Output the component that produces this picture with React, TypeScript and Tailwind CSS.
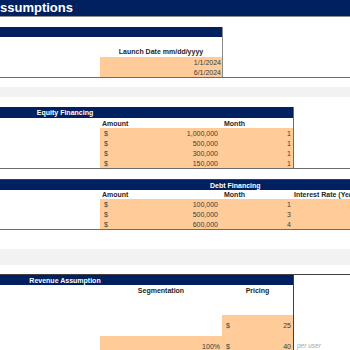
import React from 'react';

const navy = 'bg-[#002060]';
const peach = 'bg-[#ffcc99]';

const Money: React.FC<{ value: string }> = ({ value }) => (
  <div className={`${peach} w-[122px] shrink-0 h-full flex items-center justify-between pl-[4px] pr-[4px]`}>
    <span>$</span>
    <span>{value}</span>
  </div>
);

export default function App() {
  const equity = ['1,000,000', '500,000', '300,000', '150,000'];
  const debt = [
    ['100,000', '1'],
    ['500,000', '3'],
    ['600,000', '4'],
  ];

  return (
    <div
      className="w-[350px] h-[350px] overflow-hidden bg-white text-[7px] leading-none text-[#3a3a3a]"
      style={{ fontFamily: '"Liberation Sans", Arial, sans-serif' }}
    >
      {/* title */}
      <div className={`${navy} h-[17px] border-b border-[#8c8c8c] flex items-center`}>
        <span className="text-white font-bold text-[13px] -mt-[1px]">ssumptions</span>
      </div>
      <div className="h-[10px]" />

      {/* launch date */}
      <div className="w-[223px] border-r border-[#8c8c8c]">
        <div className={`${navy} h-[10px]`} />
        <div className="h-[20px] flex items-end">
          <div className="w-[100px]" />
          <div className="w-[122px] text-center font-bold text-[#262626] pb-[2px]">Launch Date mm/dd/yyyy</div>
        </div>
        {['1/1/2024', '6/1/2024'].map((d) => (
          <div key={d} className="h-[10px] flex">
            <div className="w-[100px]" />
            <div className={`${peach} w-[122px] flex items-center justify-end pr-[1px]`}>{d}</div>
          </div>
        ))}
      </div>
      <div className="h-[1px] bg-[#6b6b6b]" />
      <div className="h-[9px]" />
      <div className="h-[10px] bg-[#f2f2f2]" />
      <div className="h-[10px]" />

      {/* equity */}
      <div className="w-[294px] border-r border-[#6b6b6b]">
        <div className={`${navy} h-[11px] flex items-center`}>
          <div className="w-[130px] text-center text-white font-bold">Equity Financing</div>
        </div>
        <div className="h-[10px] flex items-center font-bold text-[#262626]">
          <div className="w-[102px] shrink-0" />
          <div className="w-[122px] shrink-0">Amount</div>
          <div>Month</div>
        </div>
        {equity.map((v) => (
          <div key={v} className="h-[10px] flex">
            <div className="w-[100px] shrink-0" />
            <Money value={v} />
            <div className={`${peach} flex-1 flex items-center justify-end pr-[2px]`}>1</div>
          </div>
        ))}
      </div>
      <div className="h-[1px] bg-[#6b6b6b]" />
      <div className="h-[10px]" />

      {/* debt */}
      <div className="border-t border-[#404040]">
        <div className={`${navy} h-[10px] flex items-center`}>
          <div className="w-[210px] shrink-0" />
          <div className="text-white font-bold">Debt Financing</div>
        </div>
        <div className="h-[9px] flex items-center font-bold text-[#262626] overflow-hidden">
          <div className="w-[102px] shrink-0" />
          <div className="w-[122px] shrink-0">Amount</div>
          <div className="w-[70px] shrink-0">Month</div>
          <div className="whitespace-nowrap shrink-0">Interest Rate (Yearly)</div>
        </div>
        {debt.map(([v, m]) => (
          <div key={v} className={`h-[10px] flex ${peach}`}>
            <div className="w-[100px] shrink-0 bg-white" />
            <Money value={v} />
            <div className="w-[71px] shrink-0 flex items-center justify-end pr-[2px]">{m}</div>
            <div className="flex-1" />
          </div>
        ))}
      </div>
      <div className="h-[1px] bg-[#6b6b6b]" />
      <div className="h-[19px]" />
      <div className="h-[16px] bg-[#f2f2f2]" />
      <div className="h-[9px]" />

      {/* revenue */}
      <div className="border-t border-[#404040]">
        <div className="flex">
          <div className="w-[294px] shrink-0 border-r border-[#404040]">
            <div className={`${navy} h-[10px] flex items-center`}>
              <div className="w-[130px] text-center text-white font-bold">Revenue Assumption</div>
            </div>
            <div className="h-[10px] flex items-center font-bold text-[#262626]">
              <div className="w-[100px] shrink-0" />
              <div className="w-[122px] shrink-0 text-center">Segmentation</div>
              <div className="flex-1 text-center">Pricing</div>
            </div>
            <div className="h-[20px]" />
            <div className="h-[21px] flex">
              <div className="w-[222px] shrink-0" />
              <div className={`${peach} flex-1 flex items-center justify-between pl-[4px] pr-[2px]`}>
                <span>$</span>
                <span>25</span>
              </div>
            </div>
            <div className="h-[20px] flex">
              <div className="w-[100px] shrink-0" />
              <div className={`${peach} w-[122px] shrink-0 flex items-center justify-end pr-[2px]`}>100%</div>
              <div className={`${peach} flex-1 flex items-center justify-between pl-[4px] pr-[2px]`}>
                <span>$</span>
                <span>40</span>
              </div>
            </div>
          </div>
          <div className="flex-1 flex flex-col justify-end">
            <div className="h-[20px] flex items-center pl-[3px] italic text-[#a6a6a6] text-[6.5px]">per user</div>
          </div>
        </div>
      </div>
    </div>
  );
}
